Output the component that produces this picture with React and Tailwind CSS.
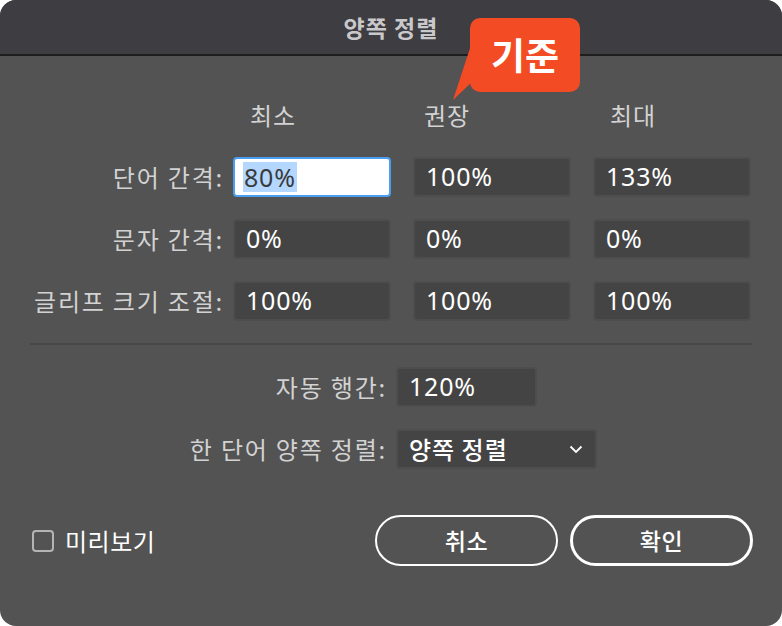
import React from "react";

const ko = { fontFamily: '"Noto Sans CJK KR", "Noto Sans", sans-serif' };
const num = { fontFamily: '"Noto Sans", "Noto Sans CJK KR", sans-serif' };

const Field = ({ value, width = "w-[158px]" }) => (
  <div
    className={`${width} h-[40px] rounded-[4px] border-2 border-[#4d4d4d] bg-[#444444] flex items-center pl-[11px] text-[25px] text-white tracking-[0.8px]`}
    style={num}
  >
    {value}
  </div>
);

const Row = ({ label, values, focus }) => (
  <div className="flex items-center h-[40px]">
    <div className="w-[224px] text-right text-[24px] tracking-[1.8px] text-[#d2d2d2]" style={ko}>
      {label}
    </div>
    <div className="ml-[9px] flex gap-[22px]">
      {values.map((v, i) =>
        i === 0 && focus ? (
          <div
            key={i}
            className="w-[158px] h-[40px] rounded-[4px] border-2 border-[#4a9df0] bg-white flex items-center pl-[8px] text-[25px] text-[#3a3a3a] tracking-[0.8px]"
            style={num}
          >
            <span className="bg-[#b3d7ff] leading-[30px] px-[1px]">{v}</span>
          </div>
        ) : (
          <Field key={i} value={v} />
        )
      )}
    </div>
  </div>
);

export default function App() {
  return (
    <div className="relative w-[782px] h-[626px] bg-white">
      <div className="w-full h-full rounded-[16px] overflow-hidden bg-[#535353] flex flex-col">
        {/* title bar */}
        <div className="h-[56px] shrink-0 bg-[#3e3d41] border-b-2 border-[#1e1e1e] flex items-center justify-center">
          <span className="text-[23px] font-bold tracking-[1px] text-[#c9c9cb]" style={ko}>
            양쪽 정렬
          </span>
        </div>

        {/* column headers */}
        <div className="flex h-[46px] mt-[36px] items-center text-[24px] tracking-[1px] text-[#d2d2d2]" style={ko}>
          <div className="w-[250px]" />
          <div className="w-[174px]">최소</div>
          <div className="w-[186px]">권장</div>
          <div>최대</div>
        </div>

        <div className="mt-[19px] flex flex-col gap-[22px]">
          <Row label="단어 간격:" values={["80%", "100%", "133%"]} focus />
          <Row label="문자 간격:" values={["0%", "0%", "0%"]} />
          <Row label="글리프 크기 조절:" values={["100%", "100%", "100%"]} />
        </div>

        <div className="mt-[22px] mx-[30px] h-[2px] bg-[#484848]" />

        <div className="mt-[22px] flex flex-col gap-[22px]">
          <div className="flex items-center h-[40px]">
            <div className="w-[387px] text-right text-[24px] tracking-[1.8px] text-[#d2d2d2]" style={ko}>
              자동 행간:
            </div>
            <div className="ml-[9px]">
              <Field value="120%" width="w-[141px]" />
            </div>
          </div>
          <div className="flex items-center h-[40px]">
            <div className="w-[387px] text-right text-[24px] tracking-[1.8px] text-[#d2d2d2]" style={ko}>
              한 단어 양쪽 정렬:
            </div>
            <div className="ml-[9px] w-[201px] h-[40px] rounded-[4px] border-2 border-[#4d4d4d] bg-[#444444] flex items-center justify-between pl-[11px] pr-[12px]">
              <span className="text-[24px] font-medium tracking-[1px] text-white" style={ko}>
                양쪽 정렬
              </span>
              <svg width="14" height="9" viewBox="0 0 14 9" fill="none">
                <path d="M1.5 1.5 L7 7 L12.5 1.5" stroke="white" strokeWidth="1.8" />
              </svg>
            </div>
          </div>
        </div>

        {/* footer */}
        <div className="mt-[46px] flex items-center pl-[32px] pr-[29px]">
          <div className="flex items-center gap-[11px]">
            <div className="w-[22px] h-[22px] rounded-[4px] border-2 border-[#b4b4b4]" />
            <span className="text-[24px] tracking-[0.5px] text-white" style={ko}>
              미리보기
            </span>
          </div>
          <div className="ml-auto flex gap-[12px]">
            <button
              className="w-[183px] h-[51px] rounded-full border-2 border-white text-[23px] font-medium tracking-[0.5px] text-white"
              style={ko}
            >
              취소
            </button>
            <button
              className="w-[183px] h-[51px] rounded-full border-[3px] border-white text-[23px] font-medium tracking-[0.5px] text-white"
              style={ko}
            >
              확인
            </button>
          </div>
        </div>
      </div>

      {/* callout */}
      <svg className="absolute left-[450px] top-[30px]" width="30" height="75" viewBox="0 0 30 75">
        <polygon points="24,6 3,70 24,50" fill="#f34b24" />
      </svg>
      <div
        className="absolute left-[470px] top-[18px] w-[110px] h-[74px] rounded-[10px] bg-[#f34b24] flex items-center justify-center text-[37px] font-bold text-white"
        style={ko}
      >
        기준
      </div>
    </div>
  );
}
